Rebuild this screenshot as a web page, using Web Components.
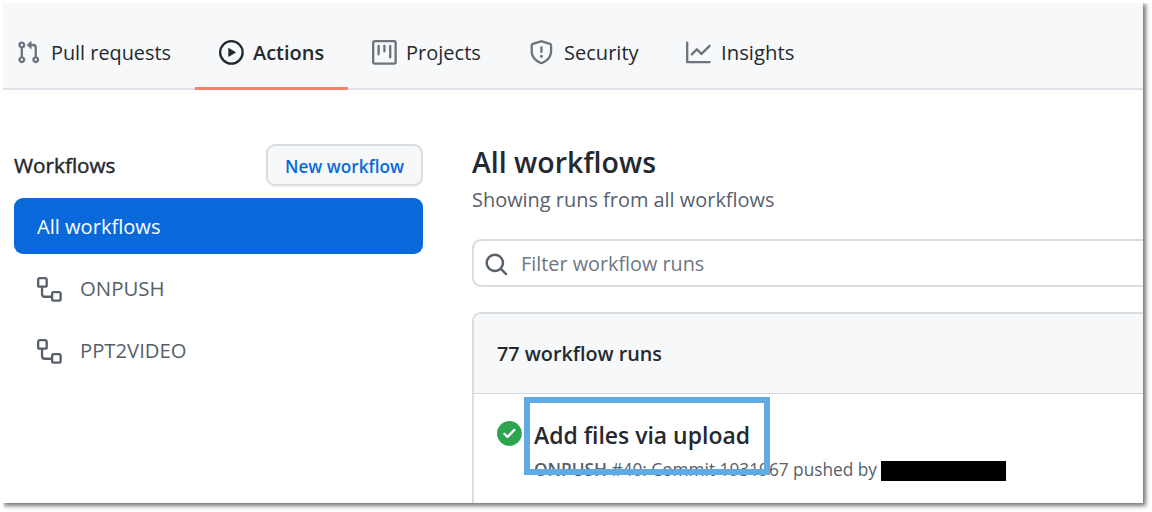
<!DOCTYPE html>
<html lang="en">
<head>
<meta charset="utf-8">
<title>Actions</title>
<style>
html,body{margin:0;height:512px;overflow:hidden;background:#fff}
body{font-family:"Open Sans","Noto Sans",sans-serif;color:#24292f}
</style>
</head>
<body>
<actions-page></actions-page>
<script>
const ICONS = {
  pr: '<path fill-rule="evenodd" d="M7.177 3.073L9.573.677A.25.25 0 0110 .854v4.792a.25.25 0 01-.427.177L7.177 3.427a.25.25 0 010-.354zM3.75 2.5a.75.75 0 100 1.5.75.75 0 000-1.5zm-2.25.75a2.25 2.25 0 113 2.122v5.256a2.251 2.251 0 11-1.5 0V5.372A2.25 2.25 0 011.5 3.25zM11 2.5h-1V4h1a1 1 0 011 1v5.628a2.251 2.251 0 101.5 0V5A2.5 2.5 0 0011 2.5zm1 10.25a.75.75 0 111.5 0 .75.75 0 01-1.5 0zM3.75 12a.75.75 0 100 1.5.75.75 0 000-1.5z"/>',
  play: '<path fill-rule="evenodd" d="M1.5 8a6.5 6.5 0 1113 0 6.5 6.5 0 01-13 0zM8 0a8 8 0 100 16A8 8 0 008 0zM6.379 5.227A.25.25 0 006 5.442v5.117a.25.25 0 00.379.214l4.264-2.559a.25.25 0 000-.428L6.379 5.227z"/>',
  project: '<path fill-rule="evenodd" d="M1.75 0A1.75 1.75 0 000 1.75v12.5C0 15.216.784 16 1.75 16h12.5A1.75 1.75 0 0016 14.25V1.75A1.75 1.75 0 0014.25 0H1.75zM1.5 1.75a.25.25 0 01.25-.25h12.5a.25.25 0 01.25.25v12.5a.25.25 0 01-.25.25H1.75a.25.25 0 01-.25-.25V1.75zM11.75 3a.75.75 0 00-.75.75v7.5a.75.75 0 001.5 0v-7.5a.75.75 0 00-.75-.75zm-8.25.75a.75.75 0 011.5 0v5.5a.75.75 0 01-1.5 0v-5.5zM8 3a.75.75 0 00-.75.75v3.5a.75.75 0 001.5 0v-3.5A.75.75 0 008 3z"/>',
  shield: '<path fill-rule="evenodd" d="M7.467.133a1.75 1.75 0 011.066 0l5.25 1.68A1.75 1.75 0 0115 3.48V7c0 1.566-.32 3.182-1.303 4.682-.983 1.498-2.585 2.813-5.032 3.855a1.7 1.7 0 01-1.33 0c-2.447-1.042-4.049-2.357-5.032-3.855C1.32 10.182 1 8.566 1 7V3.48a1.75 1.75 0 011.217-1.667l5.25-1.68zm.61 1.429a.25.25 0 00-.153 0l-5.25 1.68a.25.25 0 00-.174.238V7c0 1.358.275 2.666 1.057 3.86.784 1.194 2.121 2.34 4.366 3.297a.2.2 0 00.154 0c2.245-.956 3.582-2.104 4.366-3.298C13.225 9.666 13.5 8.36 13.5 7V3.48a.25.25 0 00-.174-.237l-5.25-1.68zM8.75 4.75a.75.75 0 00-1.5 0v3a.75.75 0 001.5 0v-3zM9 10.5a1 1 0 11-2 0 1 1 0 012 0z"/>',
  graph: '<path fill-rule="evenodd" d="M1.5 1.75a.75.75 0 00-1.5 0v12.5c0 .414.336.75.75.75h14.5a.75.75 0 000-1.5H1.5V1.75zm14.28 2.53a.75.75 0 00-1.06-1.06L10 7.94 7.53 5.47a.75.75 0 00-1.06 0L3.22 8.72a.75.75 0 001.06 1.06L7 7.06l2.47 2.47a.75.75 0 001.06 0l5.25-5.25z"/>',
  workflow: '<path fill-rule="evenodd" d="M0 1.75C0 .784.784 0 1.75 0h3.5C6.216 0 7 .784 7 1.75v3.5A1.75 1.75 0 015.25 7H4v4a1 1 0 001 1h4v-1.25C9 9.784 9.784 9 10.75 9h3.5c.966 0 1.75.784 1.75 1.75v3.5A1.75 1.75 0 0114.25 16h-3.5A1.75 1.75 0 019 14.25v-.75H5A2.5 2.5 0 012.5 11V7h-.75A1.75 1.75 0 010 5.25v-3.5zm1.75-.25a.25.25 0 00-.25.25v3.5c0 .138.112.25.25.25h3.5a.25.25 0 00.25-.25v-3.5a.25.25 0 00-.25-.25h-3.5zm9 9a.25.25 0 00-.25.25v3.5c0 .138.112.25.25.25h3.5a.25.25 0 00.25-.25v-3.5a.25.25 0 00-.25-.25h-3.5z"/>',
  search: '<path fill-rule="evenodd" d="M11.5 7a4.499 4.499 0 11-8.998 0A4.499 4.499 0 0111.5 7zm-.82 4.74a6 6 0 111.06-1.06l3.04 3.04a.75.75 0 11-1.06 1.06l-3.04-3.04z"/>',
  check: '<path fill-rule="evenodd" d="M8 16A8 8 0 108 0a8 8 0 000 16zm3.78-9.72a.75.75 0 00-1.06-1.06L6.75 9.19 5.28 7.72a.75.75 0 00-1.06 1.06l2 2a.75.75 0 001.06 0l4.5-4.5z"/>'
};

class OctIcon extends HTMLElement {
  constructor() {
    super();
    this.attachShadow({mode: 'open'}).innerHTML =
      `<style>:host{display:block;flex:none;width:24.8px;height:24.8px}svg{display:block;width:100%;height:100%;fill:currentColor;overflow:visible}</style>
       <svg viewBox="0 0 16 16">${ICONS[this.getAttribute('name')]}</svg>`;
  }
}
customElements.define('oct-icon', OctIcon);

/* One line of text, condensed or widened to the width given in "w". */
class FitText extends HTMLElement {
  constructor() {
    super();
    this.attachShadow({mode: 'open'}).innerHTML =
      `<style>:host{display:block;flex:none;white-space:nowrap;font-variant-ligatures:none}
       span{display:inline-block;transform-origin:0 50%}</style><span><slot></slot></span>`;
  }
  connectedCallback() {
    const w = parseFloat(this.getAttribute('w'));
    const span = this.shadowRoot.querySelector('span');
    this.style.width = w + 'px';
    const natural = span.getBoundingClientRect().width;
    if (natural) span.style.transform = `scaleX(${w / natural})`;
  }
}
customElements.define('fit-text', FitText);

class NavTab extends HTMLElement {
  constructor() {
    super();
    this.attachShadow({mode: 'open'}).innerHTML =
      `<style>
       :host{display:flex;align-items:center;gap:9.8px;box-sizing:border-box;height:87px;padding:14px 24px 0;font-size:20.3px;line-height:30px;border-bottom:3px solid transparent}
       oct-icon{color:#6b7480}
       :host([active]){gap:9.2px;font-weight:600;border-color:#fb7f69}
       :host([active]) oct-icon{color:#24292f}
       </style>
       <oct-icon name="${this.getAttribute('icon')}"></oct-icon><fit-text w="${this.getAttribute('w')}">${this.getAttribute('label')}</fit-text>`;
  }
}
customElements.define('nav-tab', NavTab);

class RepoNav extends HTMLElement {
  constructor() {
    super();
    this.attachShadow({mode: 'open'}).innerHTML =
      `<style>:host{display:flex;box-sizing:border-box;height:87px;background:linear-gradient(#dde2e8,#dde2e8) 0 85px/100% 2px no-repeat,#f6f8fa}
       nav{display:flex;margin-left:-11px}</style>
       <nav>
       <nav-tab icon="pr" label="Pull requests" w="120"></nav-tab>
       <nav-tab icon="play" label="Actions" w="71.2" active></nav-tab>
       <nav-tab icon="project" label="Projects" w="74.8"></nav-tab>
       <nav-tab icon="shield" label="Security" w="74.6"></nav-tab>
       <nav-tab icon="graph" label="Insights" w="73.4"></nav-tab>
       </nav>`;
  }
}
customElements.define('repo-nav', RepoNav);

class SideItem extends HTMLElement {
  constructor() {
    super();
    const icon = this.getAttribute('icon');
    this.attachShadow({mode: 'open'}).innerHTML =
      `<style>
       :host{display:flex;align-items:center;gap:17.6px;box-sizing:border-box;height:56px;padding:0 24px 0 23.6px;margin-bottom:6px;border-radius:9px;font-size:20.3px;line-height:30px;color:#57606a}
       :host([selected]){background:#0969da;color:#fff}
       oct-icon{margin-top:2px}
       fit-text{margin-top:-1px}
       </style>${icon ? `<oct-icon name="${icon}"></oct-icon>` : ''}<fit-text w="${this.getAttribute('w')}">${this.getAttribute('label')}</fit-text>`;
  }
}
customElements.define('side-item', SideItem);

class WorkflowSidebar extends HTMLElement {
  constructor() {
    super();
    this.attachShadow({mode: 'open'}).innerHTML =
      `<style>
       :host{display:block;flex:none;width:409.8px}
       header{display:flex;justify-content:space-between;align-items:center;height:42px;margin-bottom:12px;font-size:20px;line-height:30px}
       header>fit-text{-webkit-text-stroke:.45px currentColor;margin-top:1px}
       button{display:flex;align-items:center;justify-content:center;box-sizing:border-box;width:157.5px;height:42px;padding:2px 0 0;border:2px solid #dadde0;border-radius:9px;background:#f6f8fa;box-shadow:0 1.5px 0 rgba(27,31,36,.04);font:600 17.4px/26px "Open Sans",sans-serif;color:#0969da}
       </style>
       <header><fit-text w="101.5">Workflows</fit-text><button><fit-text w="119">New workflow</fit-text></button></header>
       <side-item label="All workflows" w="123.5" selected></side-item>
       <side-item icon="workflow" label="ONPUSH" w="84.5"></side-item>
       <side-item icon="workflow" label="PPT2VIDEO" w="106.5"></side-item>`;
  }
}
customElements.define('workflow-sidebar', WorkflowSidebar);

class FilterInput extends HTMLElement {
  constructor() {
    super();
    this.attachShadow({mode: 'open'}).innerHTML =
      `<style>:host{display:flex;align-items:center;gap:12px;box-sizing:border-box;height:48px;padding-left:10.2px;border:2px solid #d7dde3;border-right:0;border-radius:9px 0 0 9px;font-size:20.3px;line-height:30px;color:#6e7781}
       oct-icon{color:#57606a;margin-top:2px}</style>
       <oct-icon name="search"></oct-icon><fit-text w="183.3">Filter workflow runs</fit-text>`;
  }
}
customElements.define('filter-input', FilterInput);

class RunRow extends HTMLElement {
  constructor() {
    super();
    this.attachShadow({mode: 'open'}).innerHTML =
      `<style>
       :host{display:flex;position:relative;gap:12px;padding:27px 0 0 23.5px}
       oct-icon{color:#2da44e}
       .title{font-size:23.6px;line-height:32px;font-weight:600;color:#24292f;margin-top:-2px}
       .meta{display:flex;align-items:center;height:26px;margin-top:5px;font-size:17.5px;line-height:26px;color:#57606a}
       b{font-weight:600}
       i{display:block;width:125px;height:20px;margin:3px 0 0 4px;background:#000}
       .mark{position:absolute;left:50.5px;top:3px;box-sizing:border-box;width:246px;height:78px;border:6.5px solid #60abe4}
       </style>
       <oct-icon name="check"></oct-icon>
       <div><fit-text class="title" w="216">Add files via upload</fit-text>
       <div class="meta"><fit-text w="343"><b>ONPUSH</b> #40: Commit 1931967 pushed by</fit-text><i></i></div></div>
       <div class="mark"></div>`;
  }
}
customElements.define('run-row', RunRow);

class RunsBox extends HTMLElement {
  constructor() {
    super();
    this.attachShadow({mode: 'open'}).innerHTML =
      `<style>
       :host{display:block;box-sizing:border-box;height:260px;border:2px solid #d7dde3;border-right:0;border-radius:9px 0 0 0;overflow:hidden}
       header{display:flex;align-items:center;box-sizing:border-box;height:80px;padding:1px 0 0 23.5px;background:#f6f8fa;border-bottom:1px solid #cdd4dc;font-size:20px;line-height:30px;font-weight:600}
       </style>
       <header><fit-text w="165">77 workflow runs</fit-text></header><slot></slot>`;
  }
}
customElements.define('runs-box', RunsBox);

class RunsMain extends HTMLElement {
  constructor() {
    super();
    this.attachShadow({mode: 'open'}).innerHTML =
      `<style>
       :host{display:block;flex:1;min-width:0}
       h1{margin:0;height:36px;font-size:29.3px;line-height:36px;font-weight:600}
       .sub{font-size:20.3px;line-height:30px;height:30px;margin-top:4px;color:#57606a}
       filter-input{margin:25px 0}
       </style>
       <h1><fit-text w="184">All workflows</fit-text></h1>
       <fit-text class="sub" w="302.5">Showing runs from all workflows</fit-text>
       <filter-input></filter-input>
       <runs-box><run-row></run-row></runs-box>`;
  }
}
customElements.define('runs-main', RunsMain);

class ActionsPage extends HTMLElement {
  constructor() {
    super();
    this.attachShadow({mode: 'open'}).innerHTML =
      `<style>
       :host{display:block;padding:3px}
       .sheet{width:1140px;height:500px;box-shadow:2px 2px 4px 1px rgba(0,0,0,.52);clip-path:inset(0 -9px -9px 0)}
       .clip{height:500px;overflow:hidden;background:#fff}
       .cols{display:flex;gap:48.5px;padding:54px 0 0 10.6px}
       </style>
       <div class="sheet"><div class="clip"><repo-nav></repo-nav><div class="cols"><workflow-sidebar></workflow-sidebar><runs-main></runs-main></div></div></div>`;
  }
}
customElements.define('actions-page', ActionsPage);
</script>
</body>
</html>
